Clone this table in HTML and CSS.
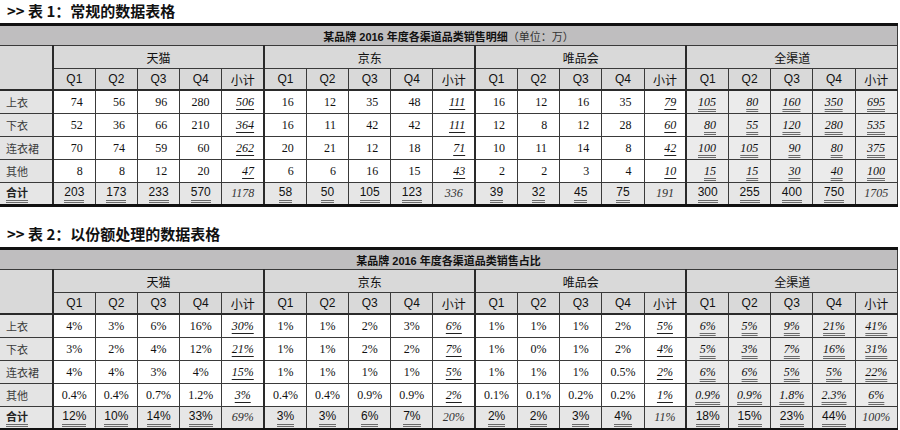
FILE: index.html
```html
<!DOCTYPE html>
<html lang="zh-CN">
<head>
<meta charset="utf-8">
<title>数据表格</title>
<link rel="stylesheet" href="styles.css">
</head>
<body>
<div class="caption">&gt;&gt; 表 1：常规的数据表格</div>
<table class="grid t1">
<colgroup><col class="lab"><col span="20"></colgroup>
<tr class="title"><td colspan="21"><b>某品牌 2016 年度各渠道品类销售明细</b><span class="unit">（单位：万）</span></td></tr>
<tr class="chan"><td class="corner" rowspan="2"></td><td colspan="5" class="sep">天猫</td><td colspan="5" class="sep">京东</td><td colspan="5" class="sep">唯品会</td><td colspan="5" class="sep">全渠道</td></tr>
<tr class="q"><td class="sep">Q1</td><td>Q2</td><td>Q3</td><td>Q4</td><td class="cj">小计</td><td class="sep">Q1</td><td>Q2</td><td>Q3</td><td>Q4</td><td class="cj">小计</td><td class="sep">Q1</td><td>Q2</td><td>Q3</td><td>Q4</td><td class="cj">小计</td><td class="sep">Q1</td><td>Q2</td><td>Q3</td><td>Q4</td><td class="cj">小计</td></tr>
<tr class="row"><th>上衣</th><td class="sep">74</td><td>56</td><td>96</td><td>280</td><td class="s"><u>506</u></td><td class="sep">16</td><td>12</td><td>35</td><td>48</td><td class="s"><u>111</u></td><td class="sep">16</td><td>12</td><td>16</td><td>35</td><td class="s"><u>79</u></td><td class="sep a"><u>105</u></td><td class="a"><u>80</u></td><td class="a"><u>160</u></td><td class="a"><u>350</u></td><td class="a"><u>695</u></td></tr>
<tr class="row"><th>下衣</th><td class="sep">52</td><td>36</td><td>66</td><td>210</td><td class="s"><u>364</u></td><td class="sep">16</td><td>11</td><td>42</td><td>42</td><td class="s"><u>111</u></td><td class="sep">12</td><td>8</td><td>12</td><td>28</td><td class="s"><u>60</u></td><td class="sep a"><u>80</u></td><td class="a"><u>55</u></td><td class="a"><u>120</u></td><td class="a"><u>280</u></td><td class="a"><u>535</u></td></tr>
<tr class="row"><th>连衣裙</th><td class="sep">70</td><td>74</td><td>59</td><td>60</td><td class="s"><u>262</u></td><td class="sep">20</td><td>21</td><td>12</td><td>18</td><td class="s"><u>71</u></td><td class="sep">10</td><td>11</td><td>14</td><td>8</td><td class="s"><u>42</u></td><td class="sep a"><u>100</u></td><td class="a"><u>105</u></td><td class="a"><u>90</u></td><td class="a"><u>80</u></td><td class="a"><u>375</u></td></tr>
<tr class="row"><th>其他</th><td class="sep">8</td><td>8</td><td>12</td><td>20</td><td class="s"><u>47</u></td><td class="sep">6</td><td>6</td><td>16</td><td>15</td><td class="s"><u>43</u></td><td class="sep">2</td><td>2</td><td>3</td><td>4</td><td class="s"><u>10</u></td><td class="sep a"><u>15</u></td><td class="a"><u>15</u></td><td class="a"><u>30</u></td><td class="a"><u>40</u></td><td class="a"><u>100</u></td></tr>
<tr class="total"><th><u>合计</u></th><td class="sep"><u>203</u></td><td><u>173</u></td><td><u>233</u></td><td><u>570</u></td><td class="ts">1178</td><td class="sep"><u>58</u></td><td><u>50</u></td><td><u>105</u></td><td><u>123</u></td><td class="ts">336</td><td class="sep"><u>39</u></td><td><u>32</u></td><td><u>45</u></td><td><u>75</u></td><td class="ts">191</td><td class="sep"><u>300</u></td><td><u>255</u></td><td><u>400</u></td><td><u>750</u></td><td class="ts">1705</td></tr>
</table>

<div class="caption caption2">&gt;&gt; 表 2：以份额处理的数据表格</div>
<table class="grid t2">
<colgroup><col class="lab"><col span="20"></colgroup>
<tr class="title"><td colspan="21"><b>某品牌 2016 年度各渠道品类销售占比</b></td></tr>
<tr class="chan"><td class="corner" rowspan="2"></td><td colspan="5" class="sep">天猫</td><td colspan="5" class="sep">京东</td><td colspan="5" class="sep">唯品会</td><td colspan="5" class="sep">全渠道</td></tr>
<tr class="q"><td class="sep">Q1</td><td>Q2</td><td>Q3</td><td>Q4</td><td class="cj">小计</td><td class="sep">Q1</td><td>Q2</td><td>Q3</td><td>Q4</td><td class="cj">小计</td><td class="sep">Q1</td><td>Q2</td><td>Q3</td><td>Q4</td><td class="cj">小计</td><td class="sep">Q1</td><td>Q2</td><td>Q3</td><td>Q4</td><td class="cj">小计</td></tr>
<tr class="row"><th>上衣</th><td class="sep">4%</td><td>3%</td><td>6%</td><td>16%</td><td class="s"><u>30%</u></td><td class="sep">1%</td><td>1%</td><td>2%</td><td>3%</td><td class="s"><u>6%</u></td><td class="sep">1%</td><td>1%</td><td>1%</td><td>2%</td><td class="s"><u>5%</u></td><td class="sep a"><u>6%</u></td><td class="a"><u>5%</u></td><td class="a"><u>9%</u></td><td class="a"><u>21%</u></td><td class="a"><u>41%</u></td></tr>
<tr class="row"><th>下衣</th><td class="sep">3%</td><td>2%</td><td>4%</td><td>12%</td><td class="s"><u>21%</u></td><td class="sep">1%</td><td>1%</td><td>2%</td><td>2%</td><td class="s"><u>7%</u></td><td class="sep">1%</td><td>0%</td><td>1%</td><td>2%</td><td class="s"><u>4%</u></td><td class="sep a"><u>5%</u></td><td class="a"><u>3%</u></td><td class="a"><u>7%</u></td><td class="a"><u>16%</u></td><td class="a"><u>31%</u></td></tr>
<tr class="row"><th>连衣裙</th><td class="sep">4%</td><td>4%</td><td>3%</td><td>4%</td><td class="s"><u>15%</u></td><td class="sep">1%</td><td>1%</td><td>1%</td><td>1%</td><td class="s"><u>5%</u></td><td class="sep">1%</td><td>1%</td><td>1%</td><td>0.5%</td><td class="s"><u>2%</u></td><td class="sep a"><u>6%</u></td><td class="a"><u>6%</u></td><td class="a"><u>5%</u></td><td class="a"><u>5%</u></td><td class="a"><u>22%</u></td></tr>
<tr class="row"><th>其他</th><td class="sep">0.4%</td><td>0.4%</td><td>0.7%</td><td>1.2%</td><td class="s"><u>3%</u></td><td class="sep">0.4%</td><td>0.4%</td><td>0.9%</td><td>0.9%</td><td class="s"><u>2%</u></td><td class="sep">0.1%</td><td>0.1%</td><td>0.2%</td><td>0.2%</td><td class="s"><u>1%</u></td><td class="sep a"><u>0.9%</u></td><td class="a"><u>0.9%</u></td><td class="a"><u>1.8%</u></td><td class="a"><u>2.3%</u></td><td class="a"><u>6%</u></td></tr>
<tr class="total"><th><u>合计</u></th><td class="sep"><u>12%</u></td><td><u>10%</u></td><td><u>14%</u></td><td><u>33%</u></td><td class="ts">69%</td><td class="sep"><u>3%</u></td><td><u>3%</u></td><td><u>6%</u></td><td><u>7%</u></td><td class="ts">20%</td><td class="sep"><u>2%</u></td><td><u>2%</u></td><td><u>3%</u></td><td><u>4%</u></td><td class="ts">11%</td><td class="sep"><u>18%</u></td><td><u>15%</u></td><td><u>23%</u></td><td><u>44%</u></td><td class="ts">100%</td></tr>
</table>
</body>
</html>
```

FILE: styles.css
```css
html, body {
  margin: 0;
  padding: 0;
  background: #ffffff;
}

body {
  font-family: "Liberation Serif", "Noto Sans CJK SC", serif;
  color: #111111;
}

.caption {
  height: 23px;
  line-height: 22px;
  padding-left: 7px;
  font-family: "Noto Sans CJK SC", sans-serif;
  font-weight: bold;
  font-size: 15px;
  color: #111111;
  white-space: nowrap;
}

.caption2 {
  margin-top: 17px;
  line-height: 20px;
}

.grid {
  width: 898px;
  border-collapse: collapse;
  table-layout: fixed;
  border-top: 3px solid #111111;
  border-bottom: 3px solid #111111;
}

.grid col.lab {
  width: 53px;
}

.grid td,
.grid th {
  border: 1px solid #3a3a3a;
  padding: 0;
  font-weight: normal;
  font-size: 12px;
  white-space: nowrap;
  overflow: visible;
}

.grid tr td:last-child {
  border-right: 1px solid #3a3a3a;
}

.grid .sep {
  border-left: 2px solid #2a2a2a;
}

/* header rows */
.title td {
  height: 19px;
  background: #bfbebf;
  text-align: center;
  font-family: "Liberation Sans", "Noto Sans CJK SC", sans-serif;
  font-size: 11px;
  color: #111111;
  border-left: none;
}

.title b {
  font-weight: bold;
}

.unit {
  font-family: "Noto Sans CJK SC", sans-serif;
  font-weight: normal;
  color: #333333;
}

.chan td,
.q td {
  background: #d9d9d9;
  text-align: center;
  font-family: "Liberation Sans", "Noto Sans CJK SC", sans-serif;
  font-size: 12px;
  color: #111111;
}

.chan td {
  height: 22px;
  font-family: "Noto Sans CJK SC", sans-serif;
}

.q td {
  height: 20px;
  border-bottom: 2px solid #2a2a2a;
}

.q td.cj {
  font-family: "Noto Sans CJK SC", sans-serif;
}

.grid td.corner {
  border-left: none;
  border-bottom: 2px solid #2a2a2a;
  background: #d9d9d9;
}

/* body rows */
.row th,
.total th {
  border-left: none;
  text-align: left;
  padding-left: 6px;
  font-family: "Noto Sans CJK SC", sans-serif;
  font-size: 11px;
  color: #3c3c3c;
  background: #e4e4e4;
}

.row td {
  height: 22px;
  font-family: "Liberation Serif", serif;
  font-size: 12px;
  color: #111111;
  background: #ffffff;
}

.t1 .row td {
  text-align: right;
  padding-right: 12px;
}

.t1 .row td.s {
  padding-right: 9px;
}

.t2 .row td {
  text-align: center;
}

.row td u {
  text-decoration: none;
}

.row td.s,
.row td.a {
  font-style: italic;
}

.row td.s u {
  text-decoration: underline;
  text-decoration-color: #222222;
  text-underline-offset: 3px;
}

.row td.a {
  background: #ebebeb;
}

.row td.a u {
  text-decoration: underline double;
  text-decoration-color: #6a6a6a;
  text-underline-offset: 3px;
}

.total td,
.total th {
  height: 21px;
  background: #e6e6e6;
}

.total th {
  font-weight: bold;
  color: #222222;
}

.total td {
  text-align: center;
  font-family: "Liberation Sans", sans-serif;
  font-size: 12px;
  color: #111111;
}

.total u {
  display: inline-block;
  text-decoration: none;
  line-height: 13px;
  padding-bottom: 1px;
  border-bottom: 3px double #6a6a6a;
}

.total td.ts {
  font-family: "Liberation Serif", serif;
  font-style: italic;
  color: #333333;
}
```
